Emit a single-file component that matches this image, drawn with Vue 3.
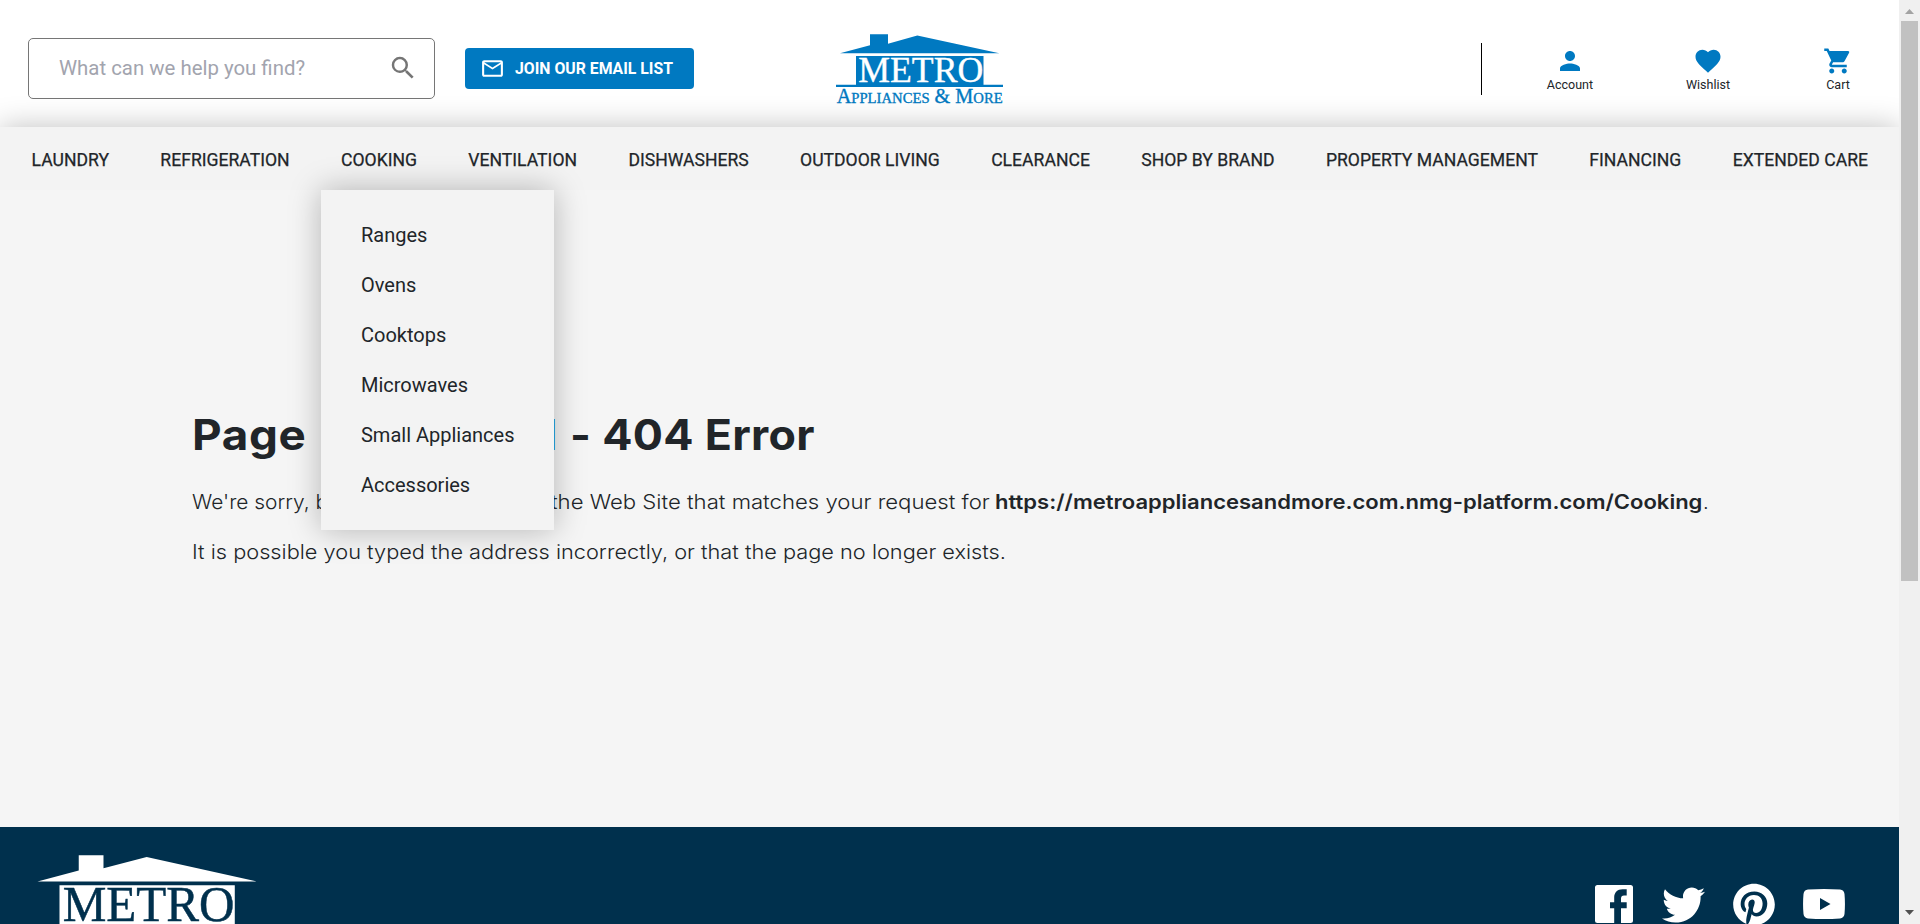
<script setup>
import { h } from 'vue'

const navItems = ['LAUNDRY', 'REFRIGERATION', 'COOKING', 'VENTILATION', 'DISHWASHERS', 'OUTDOOR LIVING', 'CLEARANCE', 'SHOP BY BRAND', 'PROPERTY MANAGEMENT', 'FINANCING', 'EXTENDED CARE']
const cooking = ['Ranges', 'Ovens', 'Cooktops', 'Microwaves', 'Small Appliances', 'Accessories']

const Logo = (props) =>
  h('svg', { viewBox: '0 0 167 72', fill: props.color }, [
    h('path', { d: `M4 19.200 34 11.200V.2H52v9.500L${props.peak} 1.400 163.300 19.200Z` }),
    h('path', { d: 'M20 22h127.500v28.700H167v2.200H0v-2.200h20Z' }),
    h('text', { x: 22.300, y: 48.300, 'font-size': 36.500, fill: props.cut, stroke: props.cut, 'stroke-width': 0.350, textLength: 125, lengthAdjust: 'spacingAndGlyphs' }, 'METRO'),
    h('text', { x: 0.700, y: 69, 'font-size': 20, textLength: 166, lengthAdjust: 'spacingAndGlyphs', stroke: props.color, 'stroke-width': 0.350 }, [
      'A', h('tspan', { 'font-size': 14.500 }, 'PPLIANCES'), ' & M', h('tspan', { 'font-size': 14.500 }, 'ORE')
    ])
  ])
Logo.props = ['color', 'cut', 'peak']
</script>

<template>
  <div class="window">
    <div class="page">
      <header class="header">
        <div class="search">
          <span>What can we help you find?</span>
          <svg viewBox="0 0 24 24" width="30" height="30"><path d="M15.500 14h-.79l-.28-.27A6.470 6.470 0 0 0 16 9.500 6.500 6.500 0 1 0 9.500 16c1.610 0 3.090-.59 4.230-1.570l.27.28v.79l5 4.990L20.490 19l-4.990-5zm-6 0C7.010 14 5 11.990 5 9.500S7.010 5 9.500 5 14 7.010 14 9.500 11.990 14 9.500 14z" /></svg>
        </div>
        <button class="join">
          <svg viewBox="0 0 24 24" width="25" height="25"><path d="M22 6c0-1.100-.9-2-2-2H4c-1.100 0-2 .9-2 2v12c0 1.100.9 2 2 2h16c1.100 0 2-.9 2-2V6zm-2 0-8 5-8-5h16zm0 12H4V8l8 5 8-5v10z" /></svg>
          JOIN OUR EMAIL LIST
        </button>
        <Logo class="logo" color="#0079c1" cut="#fff" peak="81.3" />
        <div class="tools">
          <a class="tool account"><svg viewBox="0 0 24 24"><path d="M12 12c2.210 0 4-1.790 4-4s-1.790-4-4-4-4 1.790-4 4 1.790 4 4 4zm0 2c-2.670 0-8 1.340-8 4v2h16v-2c0-2.660-5.330-4-8-4z" /></svg>Account</a>
          <a class="tool wishlist"><svg viewBox="0 0 24 24"><path d="m12 21.350-1.450-1.320C5.400 15.360 2 12.280 2 8.500 2 5.420 4.420 3 7.500 3c1.740 0 3.410.81 4.500 2.090C13.090 3.810 14.760 3 16.500 3 19.580 3 22 5.420 22 8.500c0 3.780-3.400 6.860-8.550 11.540L12 21.350z" /></svg>Wishlist</a>
          <a class="tool cart"><svg viewBox="0 0 24 24"><path d="M7 18c-1.100 0-1.990.9-1.990 2S5.900 22 7 22s2-.9 2-2-.9-2-2-2zM1 2v2h2l3.600 7.590-1.350 2.450c-.16.28-.25.61-.25.960 0 1.100.9 2 2 2h12v-2H7.420c-.14 0-.25-.11-.25-.25l.03-.12.900-1.630h7.450c.75 0 1.410-.41 1.750-1.030l3.580-6.490A1 1 0 0 0 20 4H5.210l-.94-2H1zm16 16c-1.100 0-1.990.9-1.990 2s.89 2 1.990 2 2-.9 2-2-.9-2-2-2z" /></svg>Cart</a>
        </div>
      </header>

      <nav class="nav">
        <div v-for="item in navItems" :key="item" class="nav-item">
          {{ item }}
          <ul v-if="item === 'COOKING'" class="menu">
            <li v-for="entry in cooking" :key="entry">{{ entry }}</li>
          </ul>
        </div>
      </nav>

      <main class="content">
        <h1><span class="h-a"><span class="h-page">Page</span><b>Not Found</b></span><span class="h-b">- 404 Error</span></h1>
        <p class="line"><span class="l-a">We're sorry, but there is no page on</span><span class="l-b">the Web Site that matches your request for</span><strong>https://metroappliancesandmore.com.nmg-platform.com/Cooking</strong>.</p>
        <p class="line"><span class="l-c">It is possible you typed the address incorrectly, or that the page no longer exists.</span></p>
      </main>

      <footer class="footer">
        <Logo class="footer-logo" color="#fff" cut="#00304d" peak="83.4" />
        <div class="social">
          <svg class="fb" viewBox="0 0 38 38"><path d="M2.500 0h33A2.500 2.500 0 0 1 38 2.500v33a2.500 2.500 0 0 1-2.500 2.500H26V23.200h5.700v-6H26v-3.700c0-2 1-3 3-3h2.700V4.300h-4.200c-5.200 0-8.300 3.300-8.300 8.400v4.500H15v6h4.200V38H2.500A2.500 2.500 0 0 1 0 35.500v-33A2.500 2.500 0 0 1 2.500 0z" /></svg>
          <svg class="tw" viewBox="0 48 512 416"><path d="M459.370 151.716c.325 4.548.325 9.097.325 13.645 0 138.720-105.583 298.558-298.558 298.558-59.452 0-114.680-17.219-161.137-47.106 8.447.974 16.568 1.299 25.340 1.299 49.055 0 94.213-16.568 130.274-44.832-46.132-.975-84.792-31.188-98.112-72.772 6.498.974 12.995 1.624 19.818 1.624 9.421 0 18.843-1.300 27.614-3.573-48.081-9.747-84.143-51.980-84.143-102.985v-1.299c13.969 7.797 30.214 12.670 47.431 13.319-28.264-18.843-46.781-51.005-46.781-87.391 0-19.492 5.197-37.360 14.294-52.954 51.655 63.675 129.300 105.258 216.365 109.807-1.624-7.797-2.599-15.918-2.599-24.040 0-57.828 46.782-104.934 104.934-104.934 30.213 0 57.502 12.670 76.670 33.137 23.715-4.548 46.456-13.320 66.599-25.340-7.798 24.366-24.366 44.833-46.132 57.827 21.117-2.273 41.584-8.122 60.426-16.243-14.292 20.791-32.161 39.308-52.628 54.253z" /></svg>
          <svg class="pin" viewBox="0 0 496 512"><path d="M496 256c0 137-111 248-248 248-25.600 0-50.200-3.900-73.400-11.100 10.100-16.500 25.200-43.500 30.800-65 3-11.600 15.400-59 15.400-59 8.100 15.400 31.700 28.500 56.800 28.500 74.800 0 128.700-68.800 128.700-154.300 0-81.900-66.900-143.200-152.900-143.200-107 0-163.900 71.800-163.900 150.100 0 36.400 19.400 81.700 50.300 96.100 4.700 2.200 7.200 1.200 8.300-3.300.8-3.400 5-20.300 6.900-28.100.6-2.500.3-4.700-1.700-7.100-10.100-12.500-18.300-35.300-18.300-56.600 0-54.700 41.400-107.600 112-107.600 60.900 0 103.600 41.500 103.600 100.900 0 67.100-33.900 113.600-78 113.600-24.300 0-42.600-20.100-36.700-44.800 7-29.500 20.500-61.300 20.500-82.600 0-19-10.200-34.900-31.400-34.900-24.900 0-44.900 25.700-44.900 60.200 0 22 7.400 36.800 7.400 36.800s-24.500 103.800-29 123.200c-5 21.400-3 51.600-.9 71.200C65.400 450.900 0 361.100 0 256 0 119 111 8 248 8s248 111 248 248z" /></svg>
          <svg class="yt" viewBox="0 0 42 30"><path fill-rule="evenodd" d="M5 .6Q21-.6 37 .6q4 .4 4.500 4.400.9 10 0 20-.5 4-4.500 4.400-16 1.200-32 0-4-.4-4.500-4.400-.9-10 0-20Q1 1 5 .6zM17 9v12l10.500-6z" /></svg>
        </div>
      </footer>
    </div>
    <div class="scrollbar">
      <svg viewBox="0 0 21 21"><path d="M6 14 10.500 9 15 14Z" fill="#a3a3a3" /></svg>
      <div class="thumb"></div>
      <svg class="down" viewBox="0 0 21 21"><path d="M6 7 10.500 12 15 7Z" fill="#505050" /></svg>
    </div>
  </div>
</template>

<style>
body { margin: 0; overflow: hidden; }
</style>

<style scoped>
* { box-sizing: border-box; }
.window { display: flex; width: 1920px; height: 924px; overflow: hidden; color: #212529; font-family: Roboto, "Liberation Sans", sans-serif; }
.page { flex: none; width: 1899px; height: 924px; display: flex; flex-direction: column; background: #f5f5f5; overflow: hidden; }
.header { flex: none; height: 127px; background: #fff; display: flex; align-items: flex-start; padding-left: 28px; }
.search { width: 407px; height: 61px; margin-top: 38px; border: 1px solid #767676; border-radius: 5px; display: flex; align-items: center; justify-content: space-between; padding: 0 16px 0 30px; font-size: 20.400px; color: #a2a4ae; }
.search span { padding-bottom: 2px; }
.search svg { fill: #757575; margin-bottom: 1px; }
.join { margin: 48px 0 0 30px; width: 229px; height: 41px; border: 0; border-radius: 4px; background: #0079c1; color: #fff; font: 700 15.800px Roboto, sans-serif; display: flex; align-items: center; padding: 0 0 0 15px; gap: 10px; white-space: nowrap; }
.join svg { fill: #fff; flex: none; }
.logo { width: 167px; height: 72px; margin: 34px 0 0 142px; font-family: "Liberation Serif", serif; overflow: visible; }
.tools { display: flex; height: 52px; margin: 43px 0 0 478px; border-left: 1px solid #000; }
.tool { display: flex; flex-direction: column; align-items: center; width: 60px; font-size: 12.500px; line-height: 15px; padding-top: 3px; }
.tool svg { width: 30px; height: 30px; fill: #0079c1; margin-bottom: 1px; }
.account { margin-left: 58px; }
.wishlist { margin-left: 78px; }
.cart { margin-left: 70px; }
.nav { flex: none; height: 63px; display: flex; justify-content: space-between; align-items: center; padding: 3px 31px 0 31.500px; background: #f3f3f3; box-shadow: 0 0 30px rgba(0, 0, 0, .25); font-size: 17.600px; line-height: 24px; -webkit-text-stroke: .25px #212529; }
.nav-item { position: relative; white-space: nowrap; }
.menu { position: absolute; z-index: 5; left: -20px; top: 42px; width: 233px; height: 340px; margin: 0; padding: 20px 40px; list-style: none; background: #f3f3f3; box-shadow: 0 0 30px rgba(0, 0, 0, .27); font-size: 20px; -webkit-text-stroke: 0; }
.menu li { height: 50px; line-height: 50px; }
.content { position: relative; z-index: 1; background: #f5f5f5; flex: none; height: 637px; padding: 217px 0 0 192px; font-family: Inter, "Open Sans", sans-serif; white-space: nowrap; }
h1 { margin: 0; height: 56px; display: flex; font-size: 42px; line-height: 56px; font-weight: 700; }
h1 b { color: #0079c1; letter-spacing: -.5px; }
.h-a { width: 364px; margin-right: 14px; display: flex; justify-content: space-between; }
.h-page, .h-b, .l-a, .l-b, .l-c, .line strong { transform-origin: 0 50%; }
.h-page { transform: scaleX(1.09); letter-spacing: .6px; }
.h-b { transform: scaleX(1.065); letter-spacing: .3px; }
.line { display: flex; height: 50px; margin: 0; font-size: 20px; line-height: 50px; font-weight: 300; }
.content h1 + .line { margin-top: 14px; }
.l-a { width: 359px; transform: scaleX(1.045); }
.l-b { width: 444px; transform: scaleX(1.107); }
.l-c { transform: scaleX(1.088); }
.line strong { width: 708px; font-weight: 600; transform: scaleX(1.101); }
.footer { flex: none; height: 97px; background: #00304d; display: flex; justify-content: space-between; overflow: hidden; }
.footer-logo { flex: none; width: 229.600px; height: 99px; margin: 27.500px 0 0 32.200px; font-family: "Liberation Serif", serif; }
.social { display: flex; align-items: flex-start; padding-right: 54px; }
.social svg { fill: #fff; flex: none; }
.fb { width: 38px; height: 38px; margin: 58px 29px 0 0; }
.tw { width: 43px; height: 36px; margin: 60px 28px 0 0; }
.pin { width: 42px; height: 43px; margin: 56px 28px 0 0; }
.yt { width: 42px; height: 30px; margin-top: 62px; }
.scrollbar { width: 21px; height: 924px; background: #f0f0f0; display: flex; flex-direction: column; }
.scrollbar svg { width: 21px; height: 21px; }
.thumb { width: 17px; height: 560px; margin-left: 2px; background: #c1c1c1; }
.down { margin-top: auto; }
</style>
